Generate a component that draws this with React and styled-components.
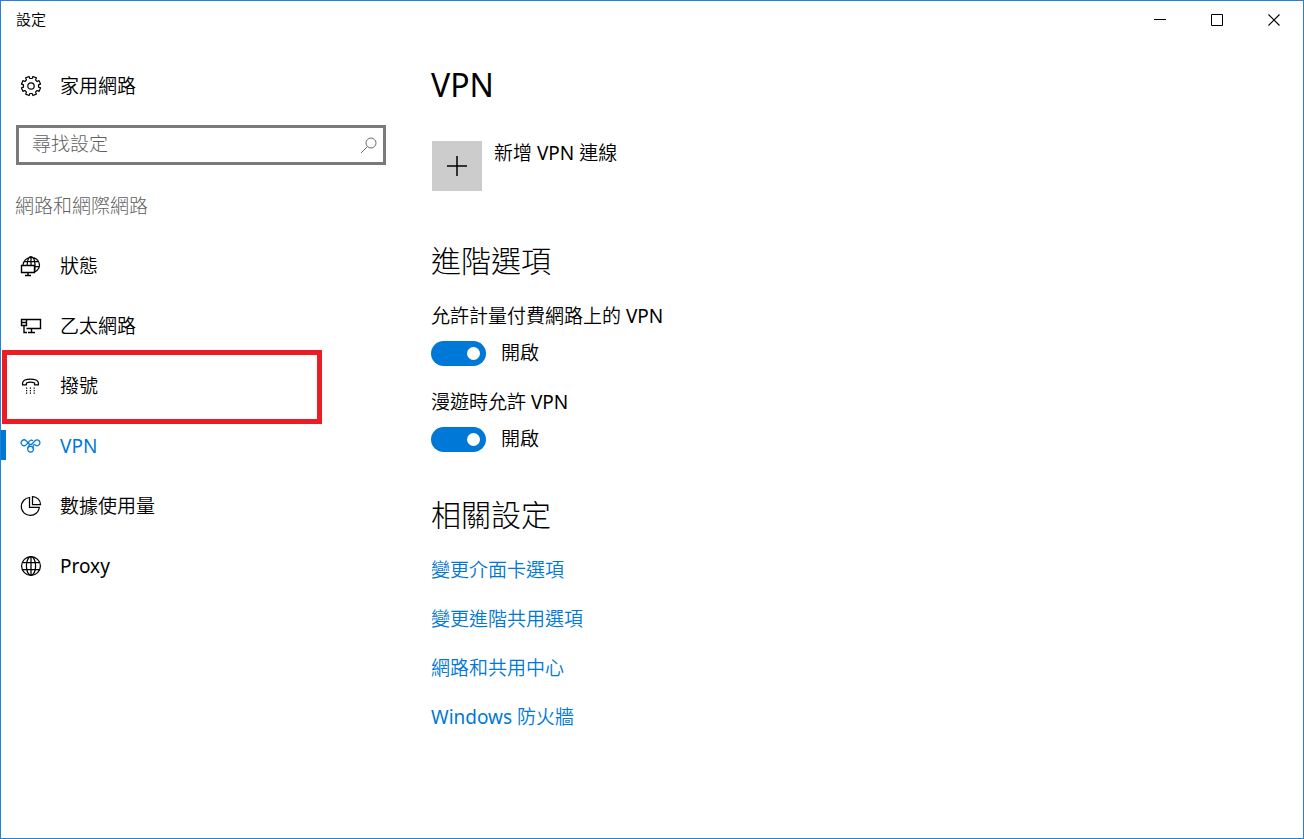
import React from "react";
import styled, { createGlobalStyle } from "styled-components";

const ACCENT = "#0078d7";

const GlobalStyle = createGlobalStyle`
  *, *::before, *::after { box-sizing: border-box; }
  body {
    margin: 0;
    background: #fff;
    color: #000;
    font: 350 19px/24px "Noto Sans", "Noto Sans CJK TC", sans-serif;
  }
  button, input { font: inherit; color: inherit; }
`;

const Window = styled.div`
  display: flex;
  flex-direction: column;
  min-height: 100vh;
  border: 1px solid #2382d3;
`;

const TitleBar = styled.header`
  display: flex;
  align-items: center;
  justify-content: space-between;
  height: 38px;
  padding-left: 15px;
  font-size: 15px;
`;

const WindowTitle = styled.span`
  padding-bottom: 2px;
`;

const CaptionButtons = styled.div`
  display: flex;
`;

const CaptionButton = styled.button`
  display: flex;
  align-items: center;
  justify-content: center;
  width: 57px;
  height: 38px;
  padding: 0;
  border: 0;
  background: none;
`;

const Body = styled.div`
  display: flex;
  flex: 1;
`;

const Sidebar = styled.aside`
  flex: 0 0 430px;
  padding-top: 17px;
`;

const SearchBox = styled.label`
  display: flex;
  align-items: center;
  height: 40px;
  margin: 9px 45px 0 15px;
  padding: 0 5px 0 13px;
  border: 3px solid #7a7a7a;
  color: #6d6d6d;
`;

const SearchInput = styled.input`
  flex: 1;
  min-width: 0;
  height: 26px;
  padding: 0 0 2px;
  border: 0;
  outline: 0;
  background: none;
  font-weight: 300;
  &::placeholder { color: #5f5f5f; opacity: 1; }
`;

const GroupTitle = styled.h2`
  margin: 29px 0 18px;
  padding-left: 14px;
  color: #5f5f5f;
  font-size: 19px;
  font-weight: 300;
`;

const NavList = styled.ul`
  margin: 0;
  padding: 0;
  list-style: none;
`;

const NavItem = styled.li`
  position: relative;
`;

const NavLink = styled.a`
  display: flex;
  align-items: center;
  gap: 18px;
  height: 60px;
  padding-left: 19px;
  color: ${(p) => (p.$active ? ACCENT : "#000")};
  text-decoration: none;
`;

const ActiveBar = styled.span`
  position: absolute;
  left: 0;
  top: 14px;
  width: 5px;
  height: 30px;
  background: ${ACCENT};
`;

const Highlight = styled.span`
  position: absolute;
  left: 1px;
  top: -6px;
  width: 320px;
  height: 74px;
  border: 5px solid #ed1c24;
  pointer-events: none;
`;

const Main = styled.main`
  flex: 1;
  min-width: 0;
  padding: 26px 24px 48px 0;
`;

const PageTitle = styled.h1`
  margin: 0 0 36px;
  font-size: 32px;
  line-height: 40px;
  font-weight: 400;
`;

const AddButton = styled.button`
  display: flex;
  gap: 12px;
  padding: 0 1px;
  border: 0;
  background: none;
`;

const AddTile = styled.span`
  display: flex;
  align-items: center;
  justify-content: center;
  width: 50px;
  height: 50px;
  background: #ccc;
`;

const Section = styled.section`
  margin-top: ${(p) => p.$space}px;
`;

const SectionTitle = styled.h2`
  margin: 0 0 23px;
  font-size: 30px;
  line-height: 40px;
  font-weight: 300;
`;

const Setting = styled.div`
  & + & { margin-top: 24px; }
`;

const SettingLabel = styled.label`
  display: block;
  margin-bottom: 13px;
`;

const SwitchRow = styled.div`
  display: flex;
  gap: 15px;
  height: 25px;
`;

const Switch = styled.input`
  appearance: none;
  display: flex;
  align-items: center;
  justify-content: flex-start;
  width: 55px;
  height: 25px;
  margin: 0;
  padding: 0 6px;
  border-radius: 13px;
  background: #999;
  &::before {
    content: "";
    width: 13px;
    height: 13px;
    border-radius: 50%;
    background: #fff;
  }
  &:checked {
    justify-content: flex-end;
    background: ${ACCENT};
  }
`;

const LinkList = styled.div`
  display: flex;
  flex-direction: column;
  align-items: flex-start;
  gap: 25px;
`;

const TextLink = styled.a`
  color: ${ACCENT};
  text-decoration: none;
`;

const Latin = styled.span`
  font-weight: 400;
`;

/* Latin words take the regular weight beside the lighter Chinese text. */
const Label = ({ text }) => (
  <span>
    {text.split(/([A-Za-z]+)/).map((part, i) => (i % 2 ? <Latin key={i}>{part}</Latin> : part))}
  </span>
);

const IconSvg = styled.svg`
  flex: none;
  display: block;
  fill: none;
  stroke: currentColor;
  stroke-width: 1.25;
`;

const Icon = ({ children, size = 22 }) => (
  <IconSvg width={size} height={size} viewBox={`0 0 ${size} ${size}`} aria-hidden="true">
    {children}
  </IconSvg>
);

/* Eight-toothed gear outline: four points per tooth around the centre. */
const gearPath = (() => {
  const points = [];
  for (let i = 0; i < 8; i += 1) {
    [[-14, 7.6], [-11, 9.7], [11, 9.7], [14, 7.6]].forEach(([offset, r]) => {
      const a = ((i * 45 + 22.5 + offset) * Math.PI) / 180;
      points.push(`${(11 + r * Math.cos(a)).toFixed(2)} ${(11 + r * Math.sin(a)).toFixed(2)}`);
    });
  }
  return `M${points.join("L")}Z`;
})();

const GearIcon = () => (
  <Icon>
    <path d={gearPath} strokeLinejoin="round" strokeWidth="1.2" />
    <circle cx="11" cy="11" r="3.2" strokeWidth="1.2" />
  </Icon>
);

const StatusIcon = () => (
  <Icon>
    <path d="M3 10A8.3 8.3 0 0 1 19.5 9.5C19.5 13 17.5 15.8 14.5 17M4 6.5H18.4M14.5 11.5H19.3M7.2 10C7.4 5 9 1.5 11 1.5S15 5 15 9.5C15 12.5 14.8 15 14.5 17M11 1.5V10" />
    <path d="M1.5 10.5H14.5V17.5H1.5ZM8 17.5V20.5M5 20.5H11" strokeWidth="1.4" />
  </Icon>
);

const EthernetIcon = () => (
  <Icon>
    <path d="M6.5 4.5H20.5V13.5H6.5M11.5 13.5V17.5M8 17.5H15M1.5 4.5H6.5V10.5H1.5ZM1.5 7.5H6.5M4 10.5V17.5H7" strokeWidth="1.4" />
  </Icon>
);

const DialIcon = () => (
  <Icon>
    <path d="M2.6 9.8C1.8 4.6 7 4 10.5 4S19.2 4.6 18.4 9.8H14.6V8C12.5 7 8.5 7 6.4 8V9.8Z" strokeLinejoin="round" />
    <path d="M6 13.2H15M6 15.7H15M6 18.2H15" strokeDasharray="1.2 2.6" strokeWidth="1.2" />
  </Icon>
);

const VpnIcon = () => (
  <Icon>
    <path d="M6.1 5.7A2.9 2.9 0 1 0 6.1 9.9L9.6 6.1C10.6 5 12 4.9 13 5.9" />
    <path d="M6.1 5.7L9.2 9C10 9.9 11.2 9.9 12 9L15 5.8A2.9 2.9 0 1 1 15 9.9C14.3 9.3 13.2 9.9 13.1 11.2L13.2 14.2" />
    <path d="M7.7 14.2C7.7 12.2 9 11.3 10.5 11.3A2.9 2.9 0 1 1 7.7 14.2C7.7 12.3 8.2 11 9.6 9.6" />
  </Icon>
);

const DataIcon = () => (
  <Icon>
    <path d="M9.5 2.5A9 9 0 1 0 19.3 12.3H9.5Z" />
    <path d="M12.5 1.5V9.5H20.5A8 8 0 0 0 12.5 1.5Z" />
  </Icon>
);

const GlobeIcon = () => (
  <Icon>
    <circle cx="11" cy="11" r="9.4" />
    <ellipse cx="11" cy="11" rx="4.6" ry="9.4" />
    <path d="M11 1.5V20.5M2.4 7.5H19.6M2.4 14.5H19.6" />
  </Icon>
);

const NAV = [
  { label: "狀態", icon: StatusIcon },
  { label: "乙太網路", icon: EthernetIcon },
  { label: "撥號", icon: DialIcon, highlighted: true },
  { label: "VPN", icon: VpnIcon, active: true },
  { label: "數據使用量", icon: DataIcon },
  { label: "Proxy", icon: GlobeIcon },
];

const SETTINGS = [
  { id: "metered", label: "允許計量付費網路上的 VPN" },
  { id: "roaming", label: "漫遊時允許 VPN" },
];

const LINKS = ["變更介面卡選項", "變更進階共用選項", "網路和共用中心", "Windows 防火牆"];

export default function App() {
  return (
    <Window lang="zh-Hant">
      <GlobalStyle />
      <TitleBar>
        <WindowTitle>設定</WindowTitle>
        <CaptionButtons>
          <CaptionButton aria-label="最小化">
            <Icon size={13}><path d="M0 5.5H12" strokeWidth="1" /></Icon>
          </CaptionButton>
          <CaptionButton aria-label="最大化">
            <Icon size={13}><path d="M.5 .5H11.5V11.5H.5Z" strokeWidth="1" /></Icon>
          </CaptionButton>
          <CaptionButton aria-label="關閉">
            <Icon size={13}><path d="M.5 .5L11.5 11.5M11.5 .5L.5 11.5" strokeWidth="1.1" /></Icon>
          </CaptionButton>
        </CaptionButtons>
      </TitleBar>
      <Body>
        <Sidebar>
          <NavLink href="#home"><GearIcon />家用網路</NavLink>
          <SearchBox>
            <SearchInput type="text" placeholder="尋找設定" aria-label="尋找設定" />
            <Icon size={18}>
              <circle cx="11" cy="7" r="5" strokeWidth="1" />
              <path d="M7.4 10.6L1 17" strokeWidth="1" />
            </Icon>
          </SearchBox>
          <GroupTitle>網路和網際網路</GroupTitle>
          <NavList>
            {NAV.map(({ label, icon: ItemIcon, active, highlighted }) => (
              <NavItem key={label}>
                {active && <ActiveBar />}
                <NavLink href={`#${label}`} $active={active}>
                  <ItemIcon />
                  <Label text={label} />
                </NavLink>
                {highlighted && <Highlight />}
              </NavItem>
            ))}
          </NavList>
        </Sidebar>
        <Main>
          <PageTitle>VPN</PageTitle>
          <AddButton>
            <AddTile>
              <Icon><path d="M11 1V21M1 11H21" strokeWidth="1.5" /></Icon>
            </AddTile>
            <Label text="新增 VPN 連線" />
          </AddButton>
          <Section $space={50}>
            <SectionTitle>進階選項</SectionTitle>
            {SETTINGS.map(({ id, label }) => (
              <Setting key={id}>
                <SettingLabel htmlFor={id}><Label text={label} /></SettingLabel>
                <SwitchRow>
                  <Switch id={id} type="checkbox" role="switch" defaultChecked />
                  <span>開啟</span>
                </SwitchRow>
              </Setting>
            ))}
          </Section>
          <Section $space={43}>
            <SectionTitle>相關設定</SectionTitle>
            <LinkList>
              {LINKS.map((label) => (
                <TextLink key={label} href={`#${label}`}><Label text={label} /></TextLink>
              ))}
            </LinkList>
          </Section>
        </Main>
      </Body>
    </Window>
  );
}
